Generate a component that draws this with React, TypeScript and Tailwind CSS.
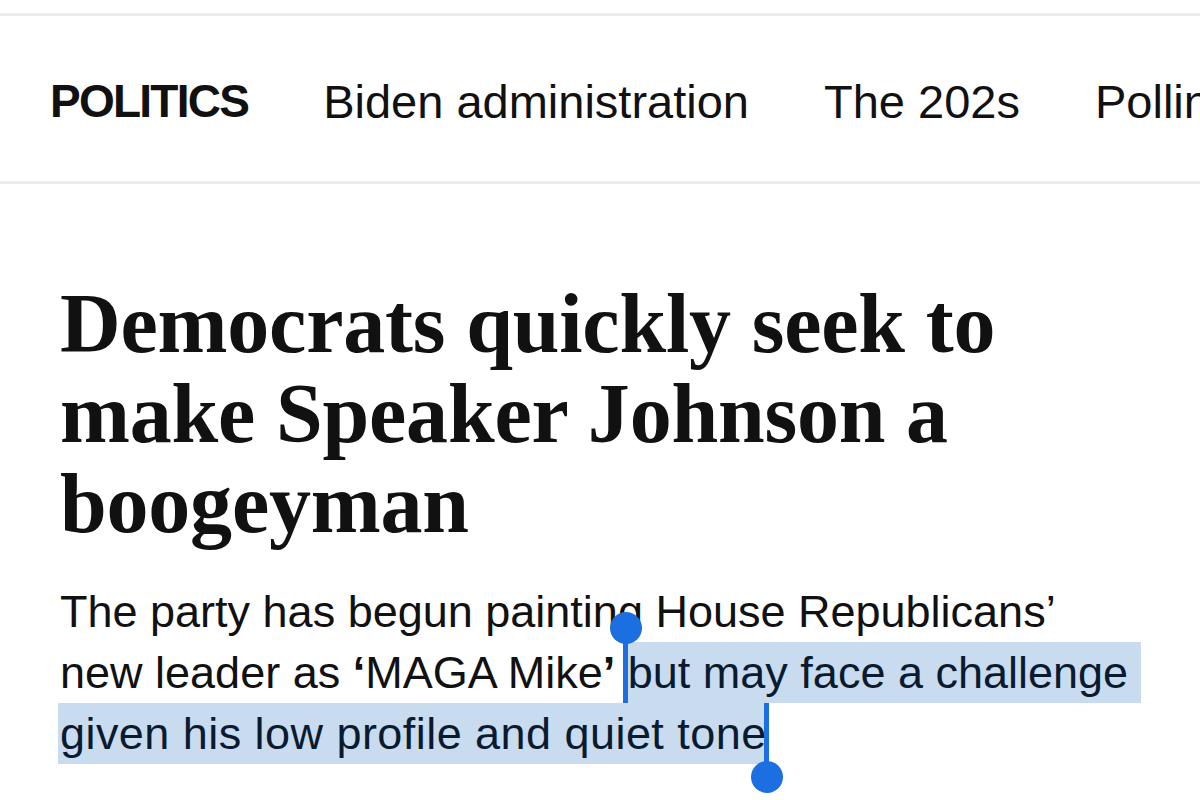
import React from "react";

const navItems = ["Biden administration", "The 202s", "Polling"];

function StartHandle() {
  return (
    <span className="absolute left-[-18px] top-[-30px] flex w-8 flex-col items-center">
      <span className="h-8 w-8 rounded-full bg-[#1b6fe0]" />
      <span className="mt-[-4px] h-[65px] w-[5px] bg-[#1b6fe0]" />
    </span>
  );
}

function EndHandle() {
  return (
    <span className="absolute right-[-16px] top-0 flex w-8 flex-col items-center">
      <span className="h-[62px] w-[5px] bg-[#1b6fe0]" />
      <span className="mt-[-4px] h-8 w-8 rounded-full bg-[#1b6fe0]" />
    </span>
  );
}

export default function App() {
  return (
    <div className="min-h-[800px] w-[1200px] overflow-hidden bg-white text-[#111]" style={{ fontFamily: '"Liberation Sans", Arial, sans-serif' }}>
      <div className="h-[13px]" />
      <nav className="h-[171px] overflow-hidden border-y-[3px] border-[#ebebeb]">
        <div className="flex items-start gap-[75px] whitespace-nowrap pl-[50px] pt-[62px] text-[47px] leading-[47px]">
          <span className="text-[46px] font-bold tracking-[-1.75px]">POLITICS</span>
          {navItems.map((item) => (
            <span key={item}>{item}</span>
          ))}
        </div>
      </nav>

      <main className="px-[60px] pt-[95px]">
        <h1
          className="text-[84px] font-bold leading-[90px] tracking-[-0.2px]"
          style={{ fontFamily: '"Liberation Serif", "Times New Roman", serif' }}
        >
          <span className="block">Democrats quickly seek to</span>
          <span className="block">make Speaker Johnson a</span>
          <span className="block">boogeyman</span>
        </h1>

        <div className="mt-[32px] text-[45px] leading-[61px] text-[#111]">
          <div className="h-[61px] whitespace-pre">The party has begun painting House Republicans’</div>
          <div className="h-[61px] whitespace-pre">
            new leader as <span className="font-bold">‘</span>MAGA Mike<span className="font-bold">’</span>{" "}
            <span className="relative inline-block h-[61px] bg-[#c9dbee] text-[#0a1a2f]">
              but may face a challenge{" "}
              <StartHandle />
            </span>
          </div>
          <div className="ml-[-2px] h-[61px] whitespace-pre">
            <span className="relative inline-block h-[61px] bg-[#c9dbee] pl-[2px] tracking-[0.45px] text-[#0a1a2f]">
              given his low profile and quiet tone
              <EndHandle />
            </span>
          </div>
        </div>
      </main>
    </div>
  );
}
